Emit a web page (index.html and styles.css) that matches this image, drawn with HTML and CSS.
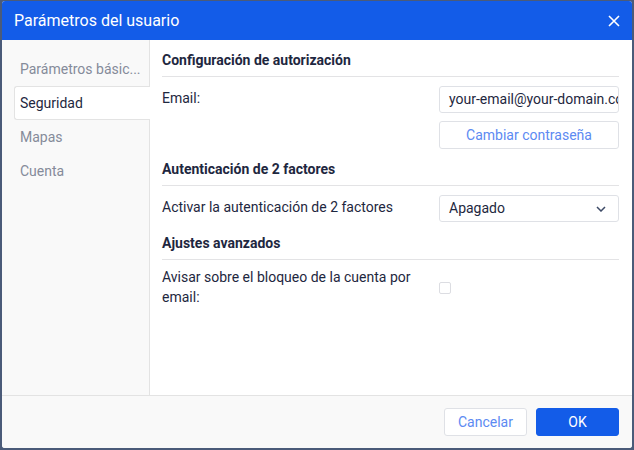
FILE: index.html
```html
<!DOCTYPE html>
<html lang="es">
<head>
<meta charset="utf-8">
<link rel="stylesheet" href="styles.css">
</head>
<body>
<div class="dialog">
  <div class="header">
    <span class="title">Parámetros del usuario</span>
    <svg class="close" width="12" height="12" viewBox="0 0 12 12"><path d="M1 1L11 11M11 1L1 11" stroke="#fff" stroke-width="1.6" fill="none"/></svg>
  </div>
  <div class="body">
    <div class="sidebar">
      <div class="nav-item">Parámetros básic...</div>
      <div class="nav-item active">Seguridad</div>
      <div class="nav-item">Mapas</div>
      <div class="nav-item">Cuenta</div>
    </div>
    <div class="content">
      <div class="section-title">Configuración de autorización</div>
      <div class="row">
        <div class="label">Email:</div>
        <div class="control"><div class="input">your-email@your-domain.com</div></div>
      </div>
      <div class="row row-btn">
        <div class="label"></div>
        <div class="control"><div class="btn-outline">Cambiar contraseña</div></div>
      </div>
      <div class="section-title">Autenticación de 2 factores</div>
      <div class="row row-select">
        <div class="label">Activar la autenticación de 2 factores</div>
        <div class="control"><div class="select"><span>Apagado</span>
          <svg width="10" height="6" viewBox="0 0 10 6"><path d="M1 1L5 5L9 1" stroke="#3d4a66" stroke-width="1.5" fill="none"/></svg></div></div>
      </div>
      <div class="section-title">Ajustes avanzados</div>
      <div class="row row-check">
        <div class="label">Avisar sobre el bloqueo de la cuenta por email:</div>
        <div class="control"><div class="checkbox"></div></div>
      </div>
    </div>
  </div>
  <div class="footer">
    <div class="btn-outline btn-footer">Cancelar</div>
    <div class="btn-primary btn-footer">OK</div>
  </div>
</div>
</body>
</html>
```
FILE: styles.css
```css
* { box-sizing: border-box; }
html, body { margin: 0; padding: 0; }
body {
  width: 634px;
  height: 450px;
  background: #4b5b79;
  font-family: Roboto, "Liberation Sans", sans-serif;
  font-size: 14px;
  color: #1e2740;
  padding: 1px 2px 2px 2px;
}
.dialog {
  width: 630px;
  height: 447px;
  background: #fff;
  border-radius: 3px;
  overflow: hidden;
  display: flex;
  flex-direction: column;
}
.header {
  height: 39px;
  background: #135ce8;
  color: #fff;
  display: flex;
  align-items: center;
  justify-content: space-between;
  padding: 0 12px 0 12px;
  flex: none;
}
.title { font-size: 16px; }
.body {
  flex: 1;
  display: flex;
  min-height: 0;
}
.sidebar {
  width: 148px;
  background: #f9f9f9;
  border-right: 1px solid #e3e3e3;
  padding-top: 12px;
  padding-left: 12px;
  flex: none;
}
.nav-item {
  height: 34px;
  line-height: 34px;
  padding-left: 6px;
  color: #858b9a;
  white-space: nowrap;
}
.nav-item.active {
  background: #fff;
  color: #1e2740;
  border: 1px solid #e3e3e3;
  border-right: none;
  border-radius: 3px 0 0 3px;
  line-height: 32px;
  margin-right: -1px;
  padding-left: 5px;
}
.content {
  flex: 1;
  padding: 11px 13px 0 12px;
}
.section-title {
  font-weight: bold;
  height: 26px;
  line-height: 18px;
  border-bottom: 1px solid #e3e3e5;
  margin-bottom: 9px;
}
.row {
  display: flex;
  align-items: flex-start;
  min-height: 27px;
  margin-bottom: 8px;
}
.row-btn { margin-bottom: 11px; }
.row-select { margin-bottom: 12px; }
.label {
  flex: 1;
  line-height: 20px;
  padding-top: 2px;
  padding-right: 14px;
}
.control { width: 180px; flex: none; }
.input, .select {
  height: 27px;
  border: 1px solid #dfe1e6;
  border-radius: 3px;
  padding: 0 9px;
  line-height: 25px;
  white-space: nowrap;
  overflow: hidden;
}
.select {
  display: flex;
  align-items: center;
  justify-content: space-between;
  padding-right: 12px;
}
.btn-outline {
  height: 28px;
  border: 1px solid #dfe1e6;
  border-radius: 3px;
  color: #5c8af2;
  text-align: center;
  line-height: 26px;
  background: #fff;
}
.row-check .label { padding-top: 0; margin-top: -2px; }
.checkbox {
  width: 12px;
  height: 12px;
  border: 1px solid #dcdde2;
  border-radius: 2px;
  margin-top: 13px;
}
.footer {
  height: 53px;
  flex: none;
  background: #f9f9f9;
  border-top: 1px solid #e3e3e3;
  display: flex;
  justify-content: flex-end;
  align-items: center;
  gap: 9px;
  padding-right: 13px;
}
.btn-footer {
  width: 83px;
  height: 28px;
  line-height: 26px;
  text-align: center;
  border-radius: 3px;
}
.btn-primary {
  background: #135ce8;
  color: #fff;
  border: 1px solid #135ce8;
}
```
